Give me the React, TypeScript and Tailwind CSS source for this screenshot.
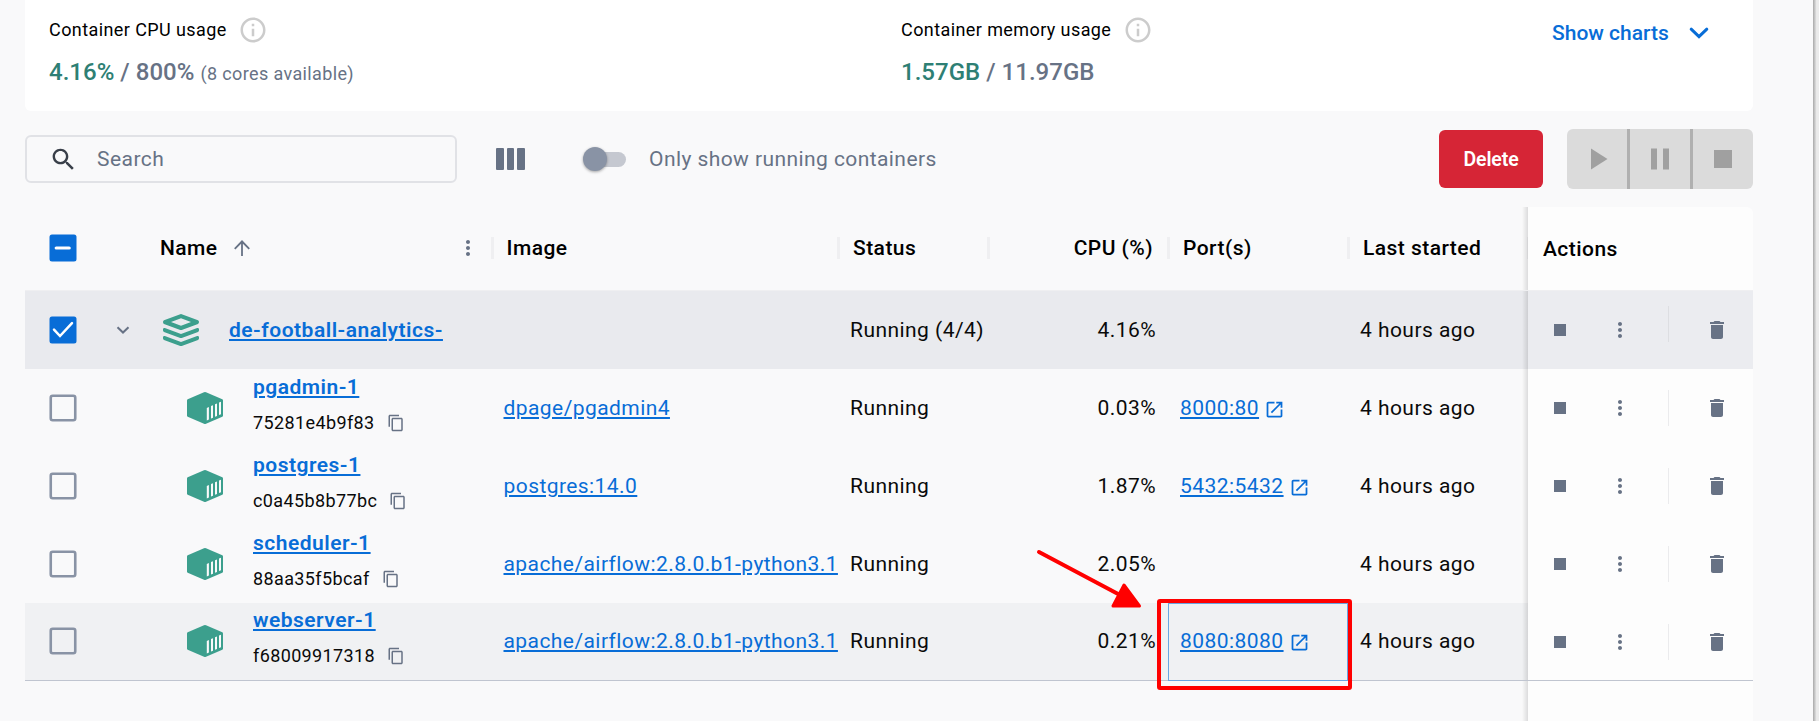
import type { ReactNode } from 'react';

type Row = {
  name: string;
  id: string;
  image: string;
  cpu: string;
  port?: string;
  highlighted?: boolean;
};

const rows: Row[] = [
  { name: 'pgadmin-1', id: '75281e4b9f83', image: 'dpage/pgadmin4', cpu: '0.03%', port: '8000:80' },
  { name: 'postgres-1', id: 'c0a45b8b77bc', image: 'postgres:14.0', cpu: '1.87%', port: '5432:5432' },
  { name: 'scheduler-1', id: '88aa35f5bcaf', image: 'apache/airflow:2.8.0.b1-python3.1', cpu: '2.05%' },
  {
    name: 'webserver-1',
    id: 'f68009917318',
    image: 'apache/airflow:2.8.0.b1-python3.1',
    cpu: '0.21%',
    port: '8080:8080',
    highlighted: true,
  },
];

function Glyph({ d, className }: { d: string; className: string }) {
  return (
    <svg viewBox="0 0 24 24" fill="currentColor" className={`shrink-0 ${className}`}>
      <path d={d} />
    </svg>
  );
}

const INFO =
  'M11 7h2v2h-2zm0 4h2v6h-2zm1-9C6.48 2 2 6.48 2 12s4.48 10 10 10 10-4.48 10-10S17.52 2 12 2zm0 18c-4.41 0-8-3.59-8-8s3.59-8 8-8 8 3.59 8 8-3.59 8-8 8z';
const SEARCH =
  'M15.5 14h-.79l-.28-.27C15.41 12.59 16 11.11 16 9.5 16 5.91 13.09 3 9.5 3S3 5.91 3 9.5 5.91 16 9.5 16c1.61 0 3.09-.59 4.23-1.57l.27.28v.79l5 4.99L20.49 19l-4.99-5zm-6 0C7.01 14 5 11.99 5 9.5S7.01 5 9.5 5 14 7.01 14 9.5 11.99 14 9.5 14z';
const MORE =
  'M12 8c1.1 0 2-.9 2-2s-.9-2-2-2-2 .9-2 2 .9 2 2 2zm0 2c-1.1 0-2 .9-2 2s.9 2 2 2 2-.9 2-2-.9-2-2-2zm0 6c-1.1 0-2 .9-2 2s.9 2 2 2 2-.9 2-2-.9-2-2-2z';
const TRASH = 'M6 19c0 1.1.9 2 2 2h8c1.1 0 2-.9 2-2V7H6v12zM19 4h-3.5l-1-1h-5l-1 1H5v2h14V4z';
const COPY =
  'M16 1H4c-1.1 0-2 .9-2 2v14h2V3h12V1zm3 4H8c-1.1 0-2 .9-2 2v14c0 1.1.9 2 2 2h11c1.1 0 2-.9 2-2V7c0-1.1-.9-2-2-2zm0 16H8V7h11v14z';
const OPEN =
  'M19 19H5V5h7V3H5c-1.11 0-2 .9-2 2v14c0 1.1.89 2 2 2h14c1.1 0 2-.9 2-2v-7h-2v7zM14 3v2h3.59l-9.83 9.83 1.41 1.41L19 6.41V10h2V3h-7z';
const UP = 'M4.1 12.2l1.3 1.3 5.7-5.7V20h1.8V7.8l5.7 5.7 1.3-1.3L12 4.1z';

function Checkbox({ state }: { state: 'off' | 'on' | 'mixed' }) {
  return (
    <svg viewBox="0 0 28 28" className="size-7 shrink-0" fill="none">
      {state === 'off' ? (
        <rect x="1.75" y="1.75" width="24.5" height="24.5" rx="2" stroke="#8993a5" strokeWidth="2.6" />
      ) : (
        <rect x="0.5" y="0.5" width="27" height="27" rx="2.5" fill="#086dd7" />
      )}
      {state === 'on' && <path d="M5 13.7l6 6.3L23 7.2" stroke="#fff" strokeWidth="2.5" strokeLinecap="round" />}
      {state === 'mixed' && <path d="M7.2 14h13" stroke="#fff" strokeWidth="3.2" strokeLinecap="round" />}
    </svg>
  );
}

function StackIcon() {
  return (
    <svg viewBox="0 0 36 32" className="h-8 w-9 shrink-0" fill="#3c9f8d">
      <path
        fillRule="evenodd"
        d="M16.6.4Q18-.2 19.4.4L35 6.2Q36 6.7 36 8T35 9.9L19.4 15.7Q18 16.2 16.6 15.7L1 9.9Q0 9.4 0 8T1 6.2ZM18 4.2L8 8l10 3.8L28 8Z"
      />
      <path d="M0 15.2Q.1 13.7 1.8 14L18 20.1 34.2 14Q35.9 13.7 36 15.2V16.6Q36 17.6 35 18L19.4 23.8Q18 24.3 16.6 23.8L1 18Q0 17.6 0 16.6Z" />
      <path d="M0 23.2Q.1 21.7 1.8 22L18 28.1 34.2 22Q35.9 21.7 36 23.2V24.6Q36 25.6 35 26L19.4 31.8Q18 32.3 16.6 31.8L1 26Q0 25.6 0 24.6Z" />
    </svg>
  );
}

function CubeIcon() {
  return (
    <svg viewBox="0 0 36 32" className="h-8 w-9 shrink-0" fill="#3c9f8d">
      <path d="M17 .3Q18-.1 19 .3L35.3 7.2Q36 7.6 36 8.3V23.6Q36 24.4 35.3 24.8L19 31.7Q18 32.1 17 31.7L.7 24.8Q0 24.4 0 23.6V8.3Q0 7.6.7 7.2Z" />
      <g fill="#fafafb">
        <path d="M19.8 15.9l2.1-.9v12.6l-2.1.9zM24 14.1l2-.9v12.5l-2 .9zM28 12.3l2-.9v12.5l-2 .9zM32 10.6l2-.9v12.5l-2 .9z" />
      </g>
    </svg>
  );
}

function Metric({ label, used, total, note }: { label: string; used: string; total: string; note?: string }) {
  return (
    <div className="flex w-[852px] flex-col pt-[15px]">
      <div className="flex h-[30px] items-center gap-[11.5px] text-[18px] tracking-[0.41px] text-black">
        <span className="pb-px leading-[28px]">{label}</span>
        <Glyph d={INFO} className="size-[30px] text-[#cccccc]" />
      </div>
      <div className="mt-[9px] h-[36px] text-2xl/[36px] font-medium tracking-[0.02px] text-[#677285]">
        <span className="text-[#2e7f74]">{used}</span> / {total}{' '}
        {note && <span className="text-[18px] font-normal tracking-[0.37px]">{note}</span>}
      </div>
    </div>
  );
}

function HeaderCell({ children, className }: { children?: ReactNode; className: string }) {
  return (
    <div className={`flex h-full shrink-0 items-center pl-[15px] ${className}`}>
      {children}
      <span className="-mr-[1.5px] ml-auto h-[22px] w-[3px] shrink-0 bg-[#efeff1]" />
    </div>
  );
}

const actionsCell =
  "relative flex h-full w-[225px] shrink-0 items-center pl-5 before:absolute before:inset-y-0 before:-left-[6px] before:w-[6px] before:bg-gradient-to-l before:from-black/12 before:to-transparent before:content-['']";

function Actions({ group }: { group?: boolean }) {
  return (
    <div className={`${actionsCell} gap-9 text-[#677285] ${group ? 'bg-[#ebecf0]' : 'bg-[#fdfdfd]'}`}>
      <Glyph d="M6 6h12v12H6z" className="size-6" />
      <Glyph d={MORE} className="size-6" />
      <span className={`h-9 w-px ${group ? '-mt-3 bg-[#dddee2]' : 'bg-[#ebebed]'}`} />
      <Glyph d={TRASH} className="size-6" />
    </div>
  );
}

function ContainerRow({ row }: { row: Row }) {
  return (
    <div
      className={`flex h-[78px] shrink-0 items-center ${
        row.highlighted ? 'border-b border-[#c0c5d0] bg-[#f0f1f3]' : ''
      }`}
    >
      <div className={`flex w-[76px] shrink-0 justify-center ${row.highlighted ? 'pb-px' : ''}`}>
        <Checkbox state="off" />
      </div>
      <div className={`flex h-[76px] w-[391px] shrink-0 items-center pl-[86px] ${row.highlighted ? 'pb-px' : ''}`}>
        <CubeIcon />
        <div className="ml-[30px] flex flex-col pb-[6px]">
          <a className="text-[21px]/[36px] font-semibold tracking-[0.48px] text-[#086dd7] underline">{row.name}</a>
          <div className="flex h-9 items-center gap-3 text-[18px] tracking-[0.38px]">
            <span className="pb-px leading-[28px]">{row.id}</span>
            <Glyph d={COPY} className="size-[18px] text-[#677285]" />
          </div>
        </div>
      </div>
      <div className={`w-[346px] shrink-0 overflow-hidden pl-[11.5px] whitespace-nowrap ${row.highlighted ? 'pb-px' : ''}`}>
        <a className="tracking-[0.43px] text-[#086dd7] underline">{row.image}</a>
      </div>
      <div className={`w-[150px] shrink-0 pl-3 ${row.highlighted ? 'pb-px' : ''}`}>Running</div>
      <div className={`w-[180px] shrink-0 pr-3 text-right ${row.highlighted ? 'pb-px' : ''}`}>{row.cpu}</div>
      <div
        className={`flex w-[180px] shrink-0 items-center ${
          row.highlighted ? '-mb-px h-[78px] border border-[#69a5e2] pb-[2px] pl-[11px]' : 'pl-3'
        }`}
      >
        {row.port && (
          <>
            <a className="text-[#086dd7] underline">{row.port}</a>
            <Glyph d={OPEN} className="mt-[3px] ml-[5px] size-[21px] text-[#086dd7]" />
          </>
        )}
      </div>
      <div className={`w-[180px] shrink-0 pl-3 ${row.highlighted ? 'pb-px' : ''}`}>4 hours ago</div>
      <Actions />
    </div>
  );
}

export default function App() {
  return (
    <div className="relative flex h-[721px] w-[1819px] overflow-hidden bg-[#f9f9fa] font-['Roboto',sans-serif] text-[21px]/[32px] tracking-[0.45px] text-[#0a0a0a]">
      <main className="flex w-[1813px] shrink-0 flex-col pr-[60px] pl-[25px]">
        <section className="flex h-[111px] shrink-0 rounded-b-[6px] bg-white pl-6">
          <Metric label="Container CPU usage" used="4.16%" total="800%" note="(8 cores available)" />
          <Metric label="Container memory usage" used="1.57GB" total="11.97GB" />
          <button className="ml-[-201px] flex h-[66px] items-center gap-[20px] leading-[32px] font-medium tracking-normal text-[#086dd7]">
            Show charts
            <svg viewBox="0 0 20 12" className="h-3 w-5" fill="none" stroke="currentColor" strokeWidth="3">
              <path d="M2.2 2.2L10 9.6l7.8-7.4" strokeLinecap="round" />
            </svg>
          </button>
        </section>

        <section className="mt-[18px] flex h-[60px] shrink-0 items-center">
          <div className="flex h-12 w-[432px] items-center rounded-[6px] border-2 border-[#e1e2e6] pl-[22px] text-[#677285]">
            <Glyph d={SEARCH} className="size-[29px] text-[#393f49]" />
            <span className="ml-[19px]">Search</span>
          </div>
          <div className="ml-[39px] flex gap-[3px]">
            <span className="h-[22px] w-[7.7px] rounded-[1px] bg-[#677285]" />
            <span className="h-[22px] w-[7.7px] rounded-[1px] bg-[#677285]" />
            <span className="h-[22px] w-[7.7px] rounded-[1px] bg-[#677285]" />
          </div>
          <div className="ml-[58px] flex h-[15px] w-[43px] items-center rounded-full bg-gradient-to-r from-transparent from-20% to-[#c5c8d0] to-20%">
            <span className="size-6 rounded-full bg-[#8993a5] shadow-[0_1px_3px_rgba(0,0,0,0.35)]" />
          </div>
          <span className="ml-[23px] tracking-[0.42px] text-[#677285]">Only show running containers</span>
          <button className="ml-auto h-[58px] w-[104px] rounded-[6px] bg-[#d62536] text-[19.5px]/[31px] font-semibold tracking-[-0.1px] text-white">
            Delete
          </button>
          <div className="ml-6 flex h-[60px] overflow-hidden rounded-[6px] bg-[#dbdbdb] text-[#a0a0a0]">
            <button className="flex w-[60px] items-center justify-center">
              <Glyph d="M8 5v14l11-7z" className="size-9" />
            </button>
            <button className="flex w-[63px] items-center justify-center border-l-3 border-[#b0b0b0]">
              <Glyph d="M6 19h4V5H6v14zm8-14v14h4V5h-4z" className="size-9" />
            </button>
            <button className="flex w-[63px] items-center justify-center border-l-3 border-[#b0b0b0]">
              <Glyph d="M6 6h12v12H6z" className="size-9" />
            </button>
          </div>
        </section>

        <section className="mt-[18px] flex flex-1 flex-col">
          <div className="flex h-[84px] shrink-0 items-center border-b border-[#efeff1] pb-px font-medium text-black">
            <div className="flex w-[76px] shrink-0 justify-center">
              <Checkbox state="mixed" />
            </div>
            <HeaderCell className="w-[391px] !pl-[59px]">
              Name
              <Glyph d={UP} className="ml-3 size-6 text-[#677285]" />
              <Glyph d={MORE} className="-mr-[200px] ml-[202px] size-6 text-[#677285]" />
            </HeaderCell>
            <HeaderCell className="w-[346px] !pl-[14.5px]">Image</HeaderCell>
            <HeaderCell className="w-[150px]">Status</HeaderCell>
            <HeaderCell className="w-[180px]">
              <span className="w-[150px] shrink-0 text-right">CPU (%)</span>
            </HeaderCell>
            <HeaderCell className="w-[180px]">Port(s)</HeaderCell>
            <HeaderCell className="w-[180px]">Last started</HeaderCell>
            <div className={`${actionsCell} -mb-px !h-[83px] rounded-tr-[6px] bg-[#fdfdfd] pt-px !pl-[15px]`}>
              Actions
            </div>
          </div>

          <div className="flex h-[78px] shrink-0 items-center bg-[#e9eaee]">
            <div className="flex w-[76px] shrink-0 justify-center">
              <Checkbox state="on" />
            </div>
            <div className="flex w-[44px] shrink-0 justify-center">
              <svg viewBox="0 0 14 8" className="h-2 w-3.5" fill="none" stroke="#677285" strokeWidth="2">
                <path d="M1.5 1.2L7 6.5l5.5-5.3" />
              </svg>
            </div>
            <div className="flex w-[693px] shrink-0 items-center pl-[18px]">
              <StackIcon />
              <a className="ml-[30px] font-semibold tracking-[0.5px] text-[#086dd7] underline">de-football-analytics-</a>
            </div>
            <div className="w-[150px] shrink-0 pl-3">Running (4/4)</div>
            <div className="w-[180px] shrink-0 pr-3 text-right">4.16%</div>
            <div className="w-[180px] shrink-0" />
            <div className="w-[180px] shrink-0 pl-3">4 hours ago</div>
            <Actions group />
          </div>

          {rows.map((row) => (
            <ContainerRow key={row.name} row={row} />
          ))}

          <div className="flex flex-1 justify-end">
            <div className={`${actionsCell} bg-[#fdfdfd]`} />
          </div>
        </section>
      </main>

      <div className="w-[6px] bg-gradient-to-r from-[#a8a8a8] to-[#ebebeb] to-60%" />

      <div className="absolute top-[599px] left-[1157px] h-[91px] w-[195px] rounded-[3px] border-4 border-[#ff0000]" />
      <svg viewBox="0 0 110 62" className="absolute top-[548px] left-[1034px] h-[62px] w-[110px]">
        <path d="M5 4L86 47" stroke="#ff0000" strokeWidth="4" strokeLinecap="round" />
        <path
          d="M90 37L105.5 58H79Z"
          fill="#ff0000"
          stroke="#ff0000"
          strokeWidth="3"
          strokeLinejoin="round"
        />
      </svg>
    </div>
  );
}
